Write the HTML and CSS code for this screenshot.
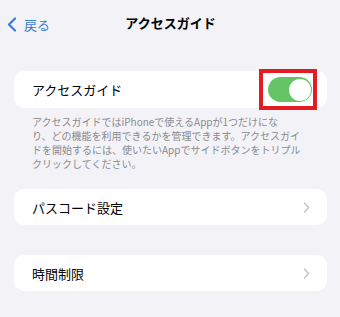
FILE: index.html
```html
<!DOCTYPE html>
<html lang="ja">
<head>
<meta charset="utf-8">
<link rel="stylesheet" href="styles.css">
</head>
<body>
<header class="nav">
  <div class="back">
    <svg class="back-icon" width="10" height="15" viewBox="0 0 10 15"><path d="M8 1.5 L2 7.5 L8 13.5" fill="none" stroke="currentColor" stroke-width="2.2" stroke-linecap="round" stroke-linejoin="round"/></svg>
    <span>戻る</span>
  </div>
  <div class="title">アクセスガイド</div>
</header>
<main class="content">
  <div class="card card-first">
    <span class="label">アクセスガイド</span>
    <div class="toggle"><div class="knob"></div></div>
    <div class="highlight"></div>
  </div>
  <p class="note">アクセスガイドではiPhoneで使えるAppが1つだけにな<br>り、どの機能を利用できるかを管理できます。アクセスガイ<br>ドを開始するには、使いたいAppでサイドボタンをトリプル<br>クリックしてください。</p>
  <div class="card">
    <span class="label">パスコード設定</span>
    <svg class="chev" width="7" height="11" viewBox="0 0 7 11"><path d="M1.5 1 L5.5 5.5 L1.5 10" fill="none" stroke="currentColor" stroke-width="1.5" stroke-linecap="round" stroke-linejoin="round"/></svg>
  </div>
  <div class="card card-last">
    <span class="label">時間制限</span>
    <svg class="chev" width="7" height="11" viewBox="0 0 7 11"><path d="M1.5 1 L5.5 5.5 L1.5 10" fill="none" stroke="currentColor" stroke-width="1.5" stroke-linecap="round" stroke-linejoin="round"/></svg>
  </div>
</main>
</body>
</html>
```
FILE: styles.css
```css
* { box-sizing: border-box; }
html, body {
  margin: 0;
  padding: 0;
  background: #f2f2f7;
  font-family: "Noto Sans CJK JP", "Noto Sans", sans-serif;
  color: #000;
}
.nav {
  position: relative;
  height: 47px;
  display: flex;
  align-items: center;
  justify-content: center;
}
.back {
  position: absolute;
  left: 7px;
  top: 15px;
  display: flex;
  align-items: center;
  gap: 7px;
  color: #3a7bd5;
  font-size: 13px;
}
.back-icon { display: block; }
.title {
  font-size: 13px;
  font-weight: 700;
  margin-left: 1px;
  margin-top: -2px;
}
.content {
  padding: 24px 13px 0 14px;
}
.card {
  position: relative;
  background: #fff;
  border-radius: 10px;
  height: 36px;
  display: flex;
  align-items: center;
  justify-content: space-between;
  padding: 0 17px 0 18px;
}
.card-first {
  height: 37px;
  padding-right: 15px;
}
.label {
  font-size: 13px;
}
.toggle {
  width: 44px;
  height: 25px;
  border-radius: 13px;
  background: #65c466;
  padding: 1.5px;
  display: flex;
  justify-content: flex-end;
}
.knob {
  width: 22px;
  height: 22px;
  border-radius: 50%;
  background: #fff;
}
.highlight {
  position: absolute;
  left: 245px;
  top: -2px;
  width: 58px;
  height: 41px;
  border: 4px solid #e31b23;
}
.note {
  margin: 7px 0 18px 18px;
  font-size: 10px;
  line-height: 14px;
  color: #8a8a8e;
  white-space: nowrap;
}
.chev {
  color: #c4c4c7;
  display: block;
}
.card-last {
  margin-top: 30px;
}
```
